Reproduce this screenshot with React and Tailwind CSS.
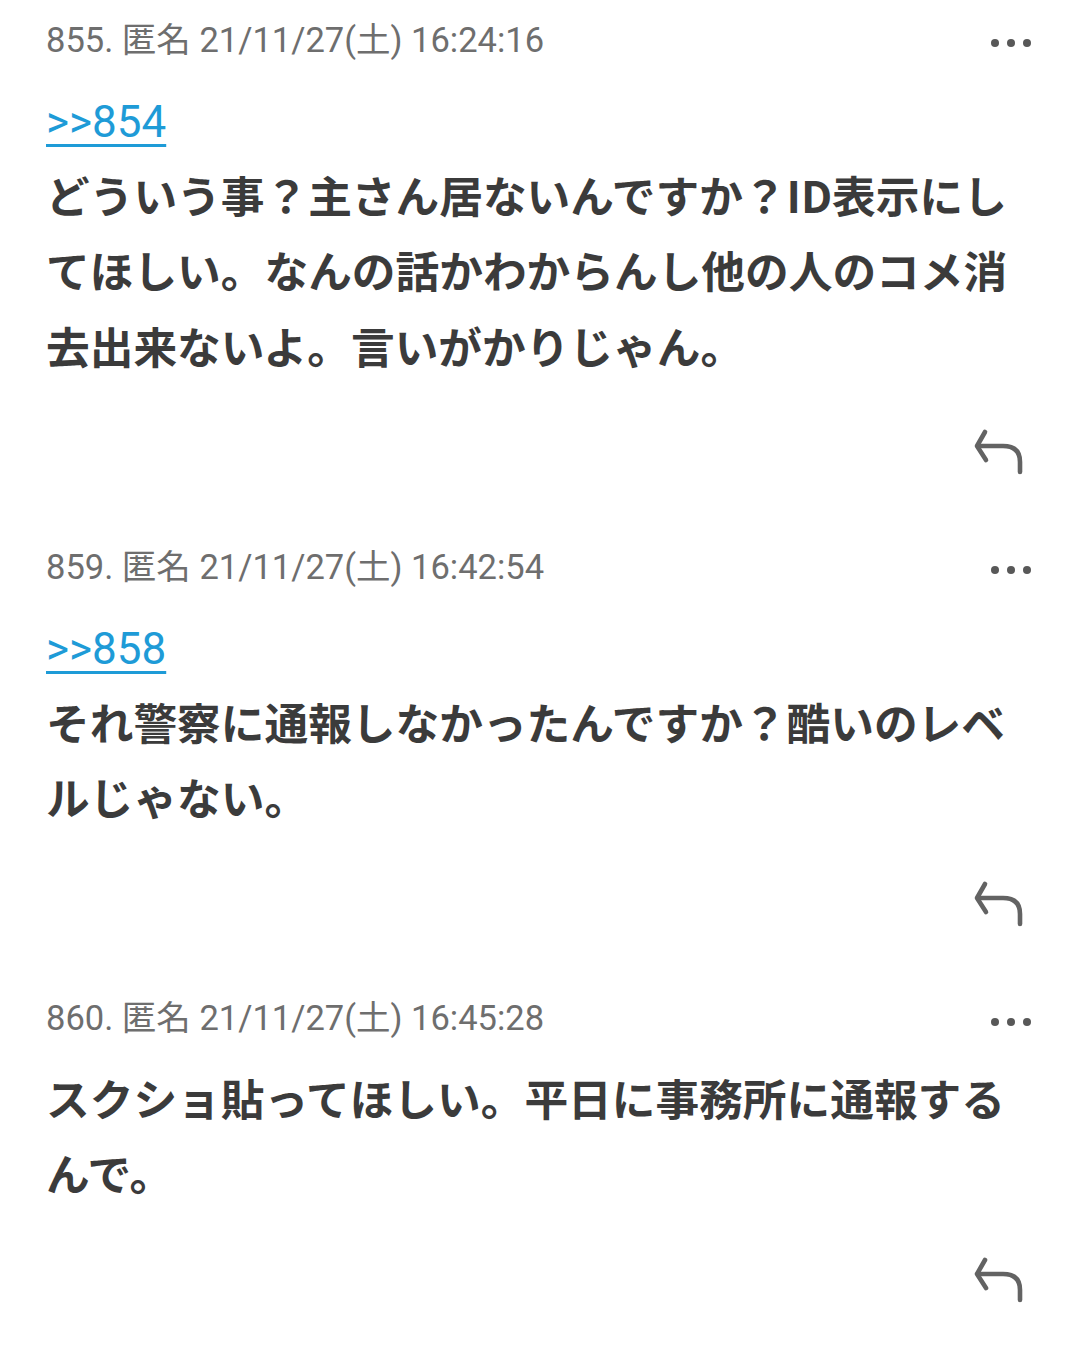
const posts = [
  {
    no: 855,
    date: '21/11/27(土) 16:24:16',
    anchor: '>>854',
    body: 'どういう事？主さん居ないんですか？ID表示にしてほしい。なんの話かわからんし他の人のコメ消去出来ないよ。言いがかりじゃん。',
  },
  {
    no: 859,
    date: '21/11/27(土) 16:42:54',
    anchor: '>>858',
    body: 'それ警察に通報しなかったんですか？酷いのレベルじゃない。',
  },
  {
    no: 860,
    date: '21/11/27(土) 16:45:28',
    anchor: null,
    body: 'スクショ貼ってほしい。平日に事務所に通報するんで。',
  },
]

const MoreDots = () => (
  <div className="flex gap-2 mr-[3px] mt-[6px]">
    <span className="w-2 h-2 rounded-full bg-[#585858]" />
    <span className="w-2 h-2 rounded-full bg-[#585858]" />
    <span className="w-2 h-2 rounded-full bg-[#585858]" />
  </div>
)

const ReplyIcon = () => (
  <svg width="50" height="48" viewBox="0 0 50 48" fill="none" stroke="#636363" strokeWidth="4.6" strokeLinecap="round" strokeLinejoin="round">
    <path d="M11 4 L3 18 L12 32" />
    <path d="M4 18 H29 Q46 18 46 34 V44" />
  </svg>
)

const Post = ({ post, first }) => (
  <div className={first ? 'pt-4' : 'pt-[67px]'}>
    {/* header */}
    <div className="flex items-center justify-between h-[48px]">
      <p className="text-[34.5px] leading-none text-[#6e6e6e] font-['Roboto','Noto_Sans_CJK_JP',sans-serif]">
        {post.no}. 匿名 {post.date}
      </p>
      <MoreDots />
    </div>

    {/* content */}
    <div className="mt-[17px] w-[980px]">
      {post.anchor && (
        <div className="h-[75.5px] leading-[82px] text-[44px] font-['Roboto',sans-serif]">
          <a className="text-[#1e9bd7] underline decoration-[3px] underline-offset-[7px]">
            {post.anchor}
          </a>
        </div>
      )}
      <p className="text-[43.7px] leading-[75.5px] font-bold text-[#3b3b3b] font-['Noto_Sans_CJK_JP',sans-serif]">
        {post.body}
      </p>
    </div>

    <div className="flex justify-end mt-[45px] mr-[10px]">
      <ReplyIcon />
    </div>
  </div>
)

export default function App() {
  return (
    <div className="bg-white min-h-[1350px] px-[46px]">
      {posts.map((post, i) => (
        <Post key={post.no} post={post} first={i === 0} />
      ))}
    </div>
  )
}
